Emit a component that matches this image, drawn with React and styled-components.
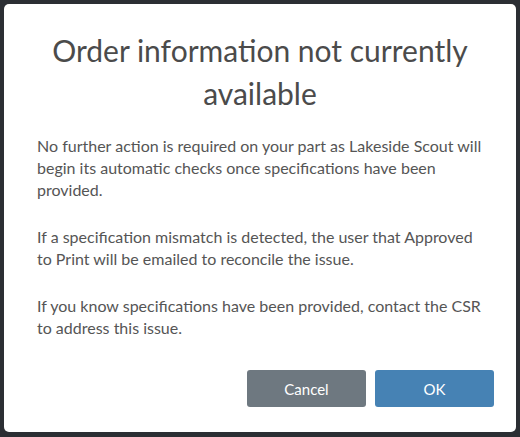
import React from "react";
import styled, { createGlobalStyle } from "styled-components";

const GlobalStyle = createGlobalStyle`
  html, body {
    margin: 0;
    padding: 0;
    background: #2b2e33;
  }
  body {
    font-family: Lato, "Open Sans", "Liberation Sans", sans-serif;
  }
`;

const Backdrop = styled.div`
  width: 520px;
  height: 437px;
  padding: 4px 4px 5px 4px;
  box-sizing: border-box;
  background: #2b2e33;
`;

const Dialog = styled.div`
  height: 100%;
  background: #ffffff;
  border-radius: 5px;
  padding: 25px 22px 0 22px;
  box-sizing: border-box;
  display: flex;
  flex-direction: column;
`;

const Body = styled.div`
  padding: 0 11px;
`;

const Title = styled.h2`
  margin: 0 0 20px 0;
  text-align: center;
  font-size: 30px;
  line-height: 43px;
  font-weight: 400;
  color: #4b4b4b;
`;

const Paragraph = styled.p`
  margin: 0 0 25px 0;
  font-size: 16px;
  line-height: 22px;
  color: #555555;
`;

const Footer = styled.div`
  display: flex;
  justify-content: flex-end;
  gap: 9px;
  margin-top: 6px;
`;

const Button = styled.button`
  width: 119px;
  height: 37px;
  border: none;
  border-radius: 3px;
  font-family: inherit;
  font-size: 15px;
  color: #ffffff;
  background: ${(p) => (p.$primary ? "#4682b4" : "#6e7880")};
  cursor: pointer;
`;

export default function App() {
  return (
    <>
      <GlobalStyle />
      <Backdrop>
        <Dialog>
          <Body>
            <Title>Order information not currently available</Title>
            <Paragraph>
              No further action is required on your part as Lakeside Scout will
              begin its automatic checks once specifications have been provided.
            </Paragraph>
            <Paragraph>
              If a specification mismatch is detected, the user that Approved to
              Print will be emailed to reconcile the issue.
            </Paragraph>
            <Paragraph>
              If you know specifications have been provided, contact the CSR to
              address this issue.
            </Paragraph>
          </Body>
          <Footer>
            <Button>Cancel</Button>
            <Button $primary>OK</Button>
          </Footer>
        </Dialog>
      </Backdrop>
    </>
  );
}
